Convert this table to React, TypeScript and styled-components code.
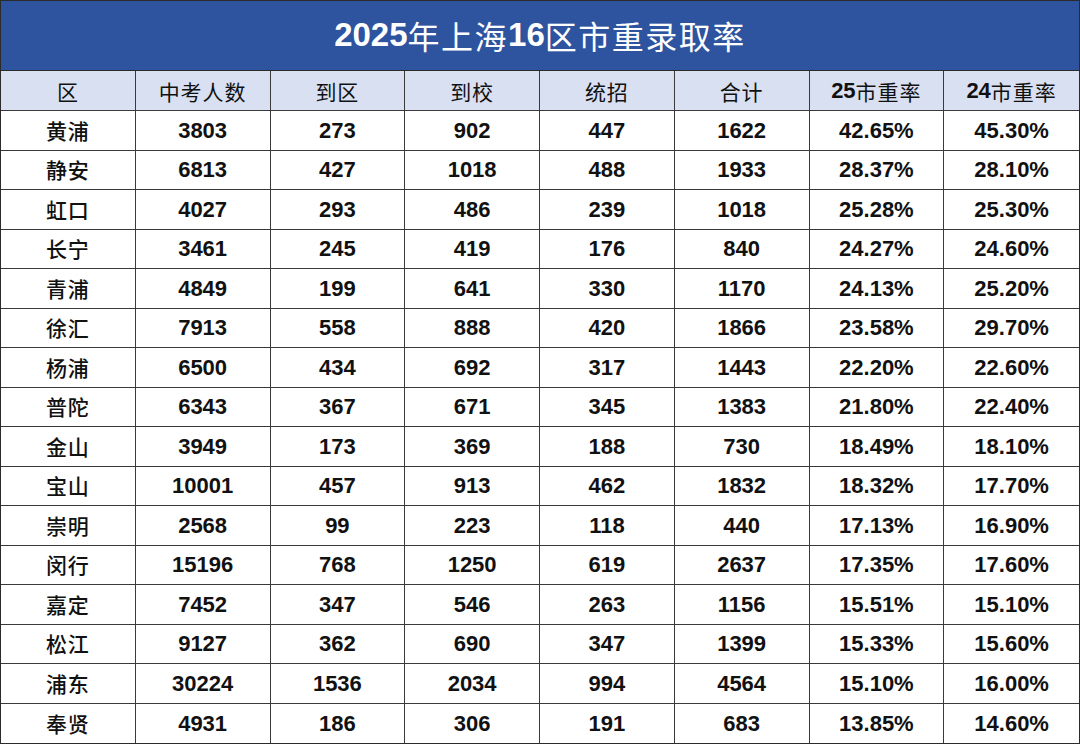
import React from "react";
import styled, { createGlobalStyle } from "styled-components";

const Global = createGlobalStyle`
  html, body { margin: 0; padding: 0; background: #ffffff; }
  body { font-family: "Liberation Sans", "Noto Sans CJK SC", sans-serif; }
`;

const Sheet = styled.div`
  width: 1080px;
  height: 744px;
  box-sizing: border-box;
  border: 1px solid #2b2b2b;
  display: flex;
  flex-direction: column;
  overflow: hidden;
`;

const Title = styled.div`
  height: 70px;
  background: #2e539f;
  color: #ffffff;
  display: flex;
  align-items: center;
  justify-content: center;
  font-size: 33px;
  border-bottom: 1px solid #2b2b2b;
  box-sizing: border-box;
  padding-bottom: 2px;
`;

const TitleNum = styled.span`
  font-family: "Liberation Sans", sans-serif;
  font-weight: 700;
  font-size: 33px;
`;

const TitleCjk = styled.span`
  font-family: "Noto Sans CJK SC", sans-serif;
  font-weight: 400;
  font-size: 32px;
  letter-spacing: 1.5px;
`;

const Grid = styled.div`
  flex: 1;
  display: grid;
  grid-template-columns: repeat(8, 1fr);
  grid-template-rows: 40px repeat(16, 1fr);
`;

const Cell = styled.div<{ $head?: boolean; $last?: boolean; $bottom?: boolean }>`
  display: flex;
  align-items: center;
  justify-content: center;
  box-sizing: border-box;
  background: ${(p) => (p.$head ? "#d9e0f1" : "#ffffff")};
  border-right: ${(p) => (p.$last ? "none" : "1.5px solid #3a3a3a")};
  border-bottom: ${(p) => (p.$bottom ? "none" : "1px solid #3a3a3a")};
  font-size: 22px;
  color: #111111;
  font-weight: 700;
  font-family: "Liberation Sans", "Noto Sans CJK SC", sans-serif;
  padding-top: 1px;
`;

const HeadText = styled.span`
  font-weight: 400;
  font-family: "Noto Sans CJK SC", sans-serif;
  font-size: 21px;
  letter-spacing: 1px;
`;

const HeadNum = styled.span`
  font-weight: 700;
  font-family: "Liberation Sans", sans-serif;
  font-size: 22px;
`;

const District = styled.span`
  font-family: "Noto Sans CJK SC", sans-serif;
  font-weight: 500;
  font-size: 21px;
  letter-spacing: 1px;
  margin-top: -2px;
`;

const headers: Array<[string, string]> = [
  ["", "区"],
  ["", "中考人数"],
  ["", "到区"],
  ["", "到校"],
  ["", "统招"],
  ["", "合计"],
  ["25", "市重率"],
  ["24", "市重率"],
];

const titleParts: Array<[boolean, string]> = [
  [true, "2025"],
  [false, "年上海"],
  [true, "16"],
  [false, "区市重录取率"],
];

const rows: string[][] = [
  ["黄浦", "3803", "273", "902", "447", "1622", "42.65%", "45.30%"],
  ["静安", "6813", "427", "1018", "488", "1933", "28.37%", "28.10%"],
  ["虹口", "4027", "293", "486", "239", "1018", "25.28%", "25.30%"],
  ["长宁", "3461", "245", "419", "176", "840", "24.27%", "24.60%"],
  ["青浦", "4849", "199", "641", "330", "1170", "24.13%", "25.20%"],
  ["徐汇", "7913", "558", "888", "420", "1866", "23.58%", "29.70%"],
  ["杨浦", "6500", "434", "692", "317", "1443", "22.20%", "22.60%"],
  ["普陀", "6343", "367", "671", "345", "1383", "21.80%", "22.40%"],
  ["金山", "3949", "173", "369", "188", "730", "18.49%", "18.10%"],
  ["宝山", "10001", "457", "913", "462", "1832", "18.32%", "17.70%"],
  ["崇明", "2568", "99", "223", "118", "440", "17.13%", "16.90%"],
  ["闵行", "15196", "768", "1250", "619", "2637", "17.35%", "17.60%"],
  ["嘉定", "7452", "347", "546", "263", "1156", "15.51%", "15.10%"],
  ["松江", "9127", "362", "690", "347", "1399", "15.33%", "15.60%"],
  ["浦东", "30224", "1536", "2034", "994", "4564", "15.10%", "16.00%"],
  ["奉贤", "4931", "186", "306", "191", "683", "13.85%", "14.60%"],
];

export default function App() {
  return (
    <>
      <Global />
      <Sheet>
        <Title>
          {titleParts.map(([isNum, t], i) =>
            isNum ? <TitleNum key={i}>{t}</TitleNum> : <TitleCjk key={i}>{t}</TitleCjk>
          )}
        </Title>
        <Grid>
          {headers.map(([num, text], i) => (
            <Cell key={"h" + i} $head $last={i === 7}>
              {num && <HeadNum>{num}</HeadNum>}
              <HeadText>{text}</HeadText>
            </Cell>
          ))}
          {rows.map((r, ri) =>
            r.map((v, ci) => (
              <Cell key={ri + "-" + ci} $last={ci === 7} $bottom={ri === rows.length - 1}>
                {ci === 0 ? <District>{v}</District> : v}
              </Cell>
            ))
          )}
        </Grid>
      </Sheet>
    </>
  );
}
